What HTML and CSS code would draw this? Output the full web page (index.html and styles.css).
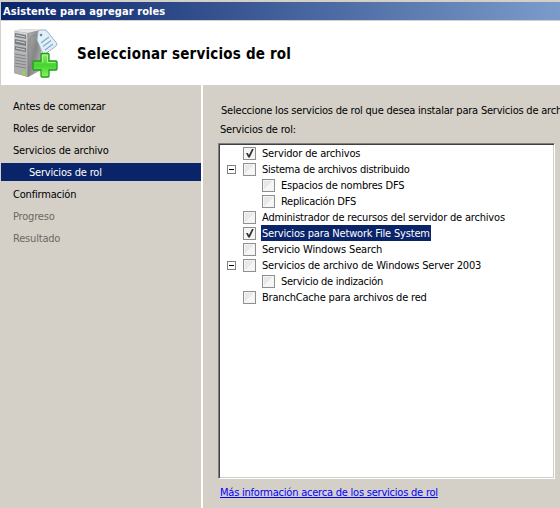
FILE: index.html
```
<!DOCTYPE html>
<html lang="es">
<head>
<meta charset="utf-8">
<title>Asistente para agregar roles</title>
<link rel="stylesheet" href="styles.css">
</head>
<body>
<div class="window">
  <div class="titlebar"><span>Asistente para agregar roles</span></div>
  <header class="header">
    <svg class="icon" width="46" height="50" viewBox="0 0 46 50">
      <defs>
        <linearGradient id="front" x1="0" y1="0" x2="0" y2="1"><stop offset="0" stop-color="#d4d4d4"/><stop offset=".5" stop-color="#b4b5b7"/><stop offset="1" stop-color="#a8a8a8"/></linearGradient>
        <linearGradient id="side" x1="0" y1="0" x2="1" y2="1"><stop offset="0" stop-color="#b2b2b2"/><stop offset=".5" stop-color="#858585"/><stop offset="1" stop-color="#c4c4c4"/></linearGradient>
        <linearGradient id="plus" x1="0" y1="0" x2="0" y2="1"><stop offset="0" stop-color="#8cf05e"/><stop offset=".5" stop-color="#45d431"/><stop offset="1" stop-color="#8af55d"/></linearGradient>
      </defs>
      <path d="M1 3 9 1 28 2 28 42 15 49 1 45Z" fill="#999"/>
      <path d="M1 3 9 1 28 2 15 5Z" fill="#e6e6e6"/>
      <path d="M1 3 15 5V49L1 45Z" fill="url(#front)"/>
      <path d="M15 5 28 2V42L15 49Z" fill="url(#side)"/>
      <path d="M15 5V49" stroke="#707070" stroke-width=".7"/>
      <path d="M2 5 13 7V11L2 9ZM2 11 13 13V18L2 16ZM2 18 13 20V24L2 22Z" fill="#7b7e81"/>
      <path d="M3 7 12 9M3 13 12 15M3 20 12 22" stroke="#cdd5da"/>
      <path d="M2 26 13 28M2 29 13 31M2 32 13 34M2 35 13 37M2 38 13 40" stroke="#858585" stroke-width="1.2"/>
      <path d="M9 43 12 44V47L9 46Z" fill="#7dea1c"/>
      <path d="M25 9Q23 6 19 8 17 9 17 12V18Q17 21 21 21H25" fill="none" stroke="#858a8e"/>
      <path d="M25 4Q25 2 27 2L33 2 43.5 15Q44.5 17 43 18L33 25.5Q31 27 29.5 25L24 12Z" fill="#e0f0fb" stroke="#9db0bf"/>
      <circle cx="28" cy="7" r="1.7" fill="#6a8398" stroke="#fff" stroke-width=".6"/>
      <path d="M28 15 36 9M30 18.5 38 12.5M32 22 40 16" stroke="#86a9c5" stroke-width="1.2"/>
      <path d="M28.5 25.5Q28 25.5 28 26.5V33H21Q20 33 20 34V41Q20 42 21 42H28V48Q28 49 29 49H35Q36 49 36 48V42H43Q44 42 44 41V34Q44 33 43 33H36V26.5Q36 25.5 35 25.5Z" fill="url(#plus)" stroke="#239b20" stroke-width="1.3"/>
      <path d="M29.5 34.5V27H34.5V34.5H42.5" fill="none" stroke="#baf79f" stroke-width=".8"/>
    </svg>
    <h1>Seleccionar servicios de rol</h1>
  </header>
  <div class="body">
    <nav class="steps">
      <div class="step">Antes de comenzar</div>
      <div class="step">Roles de servidor</div>
      <div class="step">Servicios de archivo</div>
      <div class="step current">Servicios de rol</div>
      <div class="step">Confirmación</div>
      <div class="step pending">Progreso</div>
      <div class="step pending">Resultado</div>
    </nav>
    <main class="content">
      <p class="intro">Seleccione los servicios de rol que desea instalar para Servicios de arch</p>
      <p class="label">Servicios de rol:</p>
      <div class="tree">
        <div class="row"><i class="gap"></i><i class="box checked"></i><span class="loose">Servidor de archivos</span></div>
        <div class="row"><i class="minus"></i><i class="box"></i><span class="tight">Sistema de archivos distribuido</span></div>
        <div class="row child"><i class="gap"></i><i class="box"></i><span>Espacios de nombres DFS</span></div>
        <div class="row child"><i class="gap"></i><i class="box"></i><span class="tight">Replicación DFS</span></div>
        <div class="row"><i class="gap"></i><i class="box"></i><span>Administrador de recursos del servidor de archivos</span></div>
        <div class="row"><i class="gap"></i><i class="box checked"></i><span class="selected">Servicios para Network File System</span></div>
        <div class="row"><i class="gap"></i><i class="box"></i><span class="loose">Servicio Windows Search</span></div>
        <div class="row"><i class="minus"></i><i class="box"></i><span class="loose">Servicios de archivo de Windows Server 2003</span></div>
        <div class="row child"><i class="gap"></i><i class="box"></i><span class="tight">Servicio de indización</span></div>
        <div class="row"><i class="gap"></i><i class="box"></i><span>BranchCache para archivos de red</span></div>
      </div>
      <a class="more" href="#">Más información acerca de los servicios de rol</a>
    </main>
  </div>
</div>
</body>
</html>
```
FILE: styles.css
```
* { box-sizing: border-box; }
body {
  margin: 0;
  overflow: hidden;
  background: #d4d0c8;
  color: #000;
  font: 11px/16px "DejaVu Sans Condensed", "DejaVu Sans", sans-serif;
  font-stretch: condensed;
  letter-spacing: -0.19px;
}
h1, p { margin: 0; }
.window {
  width: 560px;
  height: 508px;
  padding: 1px 0 0 1px;
  border-top: 1px solid #d4d0c8;
  display: flex;
  flex-direction: column;
}
.titlebar {
  height: 18px;
  padding-left: 2px;
  background: linear-gradient(90deg, #0a246a, #a6caf0) 0 0 / 775px 100% no-repeat;
  color: #fff;
  font-weight: bold;
  line-height: 20px;
  letter-spacing: 0.08px;
}
.header {
  height: 64px;
  margin-top: 1px;
  padding: 7px 0 0 12px;
  background: #fff;
  display: flex;
  gap: 18px;
}
.icon { flex: none; }
h1 {
  font-size: 15px;
  line-height: 20px;
  padding-top: 16px;
  letter-spacing: 0.2px;
  white-space: nowrap;
}
.body { flex: 1; display: flex; min-height: 0; }
.steps { width: 202px; padding-top: 10px; border-right: 2px solid #fff; }
.step { height: 18px; margin-bottom: 4px; padding-left: 12px; line-height: 20px; white-space: nowrap; }
.steps .step:first-child { margin-top: 2px; }
.steps .current { padding-left: 28px; background: #0a246a; color: #fff; }
.pending { color: #6b6964; }
.content { flex: 1; min-width: 0; padding: 18px 5px 0 15px; }
.intro { margin-left: 3px; margin-right: -5px; white-space: nowrap; letter-spacing: -0.21px; }
.label { margin: 3px 0 5px 2px; }
.tree {
  height: 336px;
  border: 1px solid;
  border-color: #808080 #fff #fff #808080;
  background: #fff;
  box-shadow: inset 1px 1px #404040, inset -1px -1px #d4d0c8;
  padding: 1px 0 0 8px;
}
.row { height: 16px; display: flex; align-items: center; }
.child { padding-left: 19px; }
.gap, .minus { width: 9px; height: 9px; margin-right: 7px; flex: none; }
.minus { border: 1px solid #808080; background: linear-gradient(#000, #000) 1px 3px / 5px 1px no-repeat; }
.box {
  width: 13px;
  height: 13px;
  margin-right: 5px;
  border: 1px solid #8e8f8f;
  background: linear-gradient(135deg, #e8e8e8 50%, #f6f6f6 50%);
  box-shadow: inset 0 0 0 1px #f4f4f4;
  flex: none;
}
.checked { position: relative; background: #f6f6f6; }
.checked::after {
  content: "";
  position: absolute;
  left: 2px;
  top: 1px;
  width: 8px;
  height: 9px;
  background: #333;
  clip-path: polygon(0 50%, 22% 50%, 36% 72%, 78% 0, 100% 0, 48% 100%, 28% 100%);
}
.row span { height: 16px; padding: 0 1px; line-height: 18px; white-space: nowrap; }
.row .tight { letter-spacing: -0.26px; }
.row .loose { letter-spacing: -0.16px; }
.selected { background: #0a246a; color: #fff; }
.more { display: inline-block; margin: 6px 0 0 2px; color: #00f; white-space: nowrap; letter-spacing: -0.22px; }
```
